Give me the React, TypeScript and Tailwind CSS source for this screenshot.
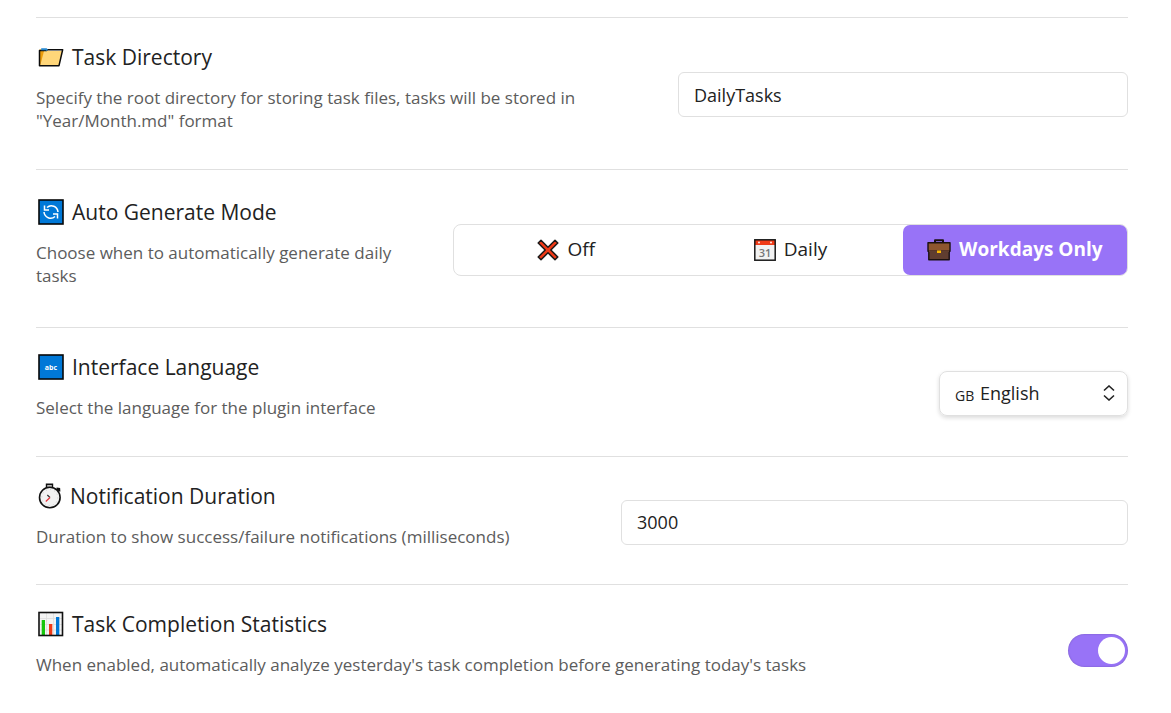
import { useState, type ReactNode } from "react";
import clsx from "clsx";

function FolderIcon() {
    return (
        <svg viewBox="0 0 26 26" className="h-[26px] w-[26px] shrink-0" aria-hidden="true">
            <path d="M1.500 5h6.500l1.500 2H24.500L21 22H1.500z" fill="#ffd679" />
            <path d="M1.500 7h4.500L2.500 20.500l-1 0z" fill="#eb9c0c" />
            <path d="M1.500 21.700V6.500h7l1-.8H24.700L21 21.700z" fill="none" stroke="#0c0c0c" strokeWidth="1.500" strokeLinejoin="round" />
            <path d="M3.200 5.200h5l1 1" fill="none" stroke="#2788d0" strokeWidth="2" />
        </svg>
    );
}

function RefreshIcon() {
    return (
        <svg viewBox="0 0 26 26" className="h-[26px] w-[26px] shrink-0" aria-hidden="true">
            <rect x="1" y="1" width="24" height="24" fill="#0078d7" stroke="#080808" strokeWidth="1.600" />
            <path d="M9 8.500C13 4.800 19.500 7.500 20 13M17 17.500C13 21.200 6.500 18.500 6 13" fill="none" stroke="#fff" strokeWidth="1.500" />
            <path d="M6.500 6.500v4.500h4.500M19.500 19.500v-4.500h-4.500" fill="none" stroke="#fff" strokeWidth="1.500" />
        </svg>
    );
}

function LettersIcon() {
    return (
        <svg viewBox="0 0 26 26" className="h-[26px] w-[26px] shrink-0" aria-hidden="true">
            <rect x="1" y="1" width="24" height="24" fill="#0078d7" stroke="#080808" strokeWidth="1.600" />
            <text x="13" y="15.500" textAnchor="middle" fill="#fff" fontSize="7" fontWeight="700" fontFamily="Open Sans, sans-serif">abc</text>
        </svg>
    );
}

function StopwatchIcon() {
    return (
        <svg viewBox="0 0 24 26" className="h-[26px] w-6 shrink-0" aria-hidden="true">
            <path d="M8.500 1.200h6v4h-6z" fill="#bbb" stroke="#111" strokeWidth="1.400" />
            <path d="M18.500 5.800l2.500 .2 .2 2.500" fill="#777" stroke="#111" strokeWidth="2.400" />
            <circle cx="11.800" cy="14.500" r="10.300" fill="#f2f2f2" stroke="#111" strokeWidth="1.600" />
            <circle cx="11.800" cy="14.500" r="8" fill="none" stroke="#ccc" strokeWidth="1" strokeDasharray="1 3.190" />
            <path d="M9.300 12l2.700 2.500" stroke="#333" strokeWidth="1.200" />
            <path d="M12 14.500l-4.200 4" stroke="#e8323c" strokeWidth="1.200" />
        </svg>
    );
}

function ChartIcon() {
    return (
        <svg viewBox="0 0 26 26" className="h-[26px] w-[26px] shrink-0" aria-hidden="true">
            <rect x="1" y="1.500" width="23.500" height="23" fill="#f4f4f4" />
            <path d="M8.500 2v22M15.500 2v22M2 7.500h22M2 13.500h22M2 19h22" stroke="#ddd" strokeWidth="0.800" />
            <rect x="3.700" y="9" width="3.300" height="15" fill="#16c60c" />
            <rect x="11" y="13" width="3.300" height="11" fill="#f03a17" />
            <rect x="18" y="6" width="3.300" height="18" fill="#0078d7" />
            <rect x="1" y="1.500" width="23.500" height="23" fill="none" stroke="#111" strokeWidth="1.600" />
        </svg>
    );
}

function CrossIcon() {
    return (
        <svg viewBox="0 0 22 22" className="h-[22px] w-[22px] shrink-0" aria-hidden="true">
            <path d="M4 1.200L1.200 4l7 7-7 7L4 20.800l7-7 7 7 2.800-2.800-7-7 7-7L18 1.200l-7 7z" fill="#f03a17" stroke="#1a1a1a" strokeWidth="1.500" strokeLinejoin="round" />
        </svg>
    );
}

function CalendarIcon() {
    return (
        <svg viewBox="0 0 22 22" className="h-[22px] w-[22px] shrink-0" aria-hidden="true">
            <rect x="0.800" y="0.800" width="20.400" height="20.400" fill="#f2f2f2" />
            <rect x="1" y="1" width="20" height="5" fill="#f03a17" />
            <circle cx="5" cy="3.500" r="0.900" fill="#fff" />
            <circle cx="17" cy="3.500" r="0.900" fill="#fff" />
            <text x="11" y="17.500" textAnchor="middle" fill="#777" fontSize="11" fontWeight="600" fontFamily="Open Sans, sans-serif">31</text>
            <rect x="0.800" y="0.800" width="20.400" height="20.400" fill="none" stroke="#1a1a1a" strokeWidth="1.500" />
        </svg>
    );
}

function BriefcaseIcon() {
    return (
        <svg viewBox="0 0 24 22" className="h-[22px] w-6 shrink-0" aria-hidden="true">
            <path d="M8 4V1.300h8V4" fill="none" stroke="#1a1010" strokeWidth="2" strokeLinejoin="round" />
            <path d="M1.800 12h20.400v8.800H1.800z" fill="#603d30" stroke="#1a1010" strokeWidth="1.400" strokeLinejoin="round" />
            <path d="M1 3.800h22v8.400H1z" fill="#8e562e" stroke="#1a1010" strokeWidth="1.400" strokeLinejoin="round" />
            <path d="M2 12.300h20" stroke="#603d30" strokeWidth="1.600" />
            <rect x="10" y="11.500" width="4" height="2.500" fill="#fdb900" />
        </svg>
    );
}

interface SettingRowProps {
    icon: ReactNode;
    title: string;
    description: string;
    htmlFor?: string;
    className?: string;
    children: ReactNode;
}

function SettingRow({ icon, title, description, htmlFor, className, children }: SettingRowProps) {
    return (
        <section className={clsx("flex items-center gap-5 border-t border-[#e0e0e0]", className || "pt-6 pb-[22px]")}>
            <div className="min-w-0 flex-1 pb-[15px]">
                <label htmlFor={htmlFor} className="flex h-[30px] items-center gap-2 pl-[2px] text-[21px] leading-[30px] text-[#222]">
                    {icon}
                    {title}
                </label>
                <p className="mt-[14px] text-[17px] leading-[23px] text-[#5c5c5c]">{description}</p>
            </div>
            {children}
        </section>
    );
}

const modes = [
    { id: "off", label: "Off", icon: <CrossIcon /> },
    { id: "daily", label: "Daily", icon: <CalendarIcon /> },
    { id: "workdays", label: "Workdays Only", icon: <BriefcaseIcon /> },
];

export default function App() {
    const [directory, setDirectory] = useState("DailyTasks");
    const [mode, setMode] = useState("workdays");
    const [duration, setDuration] = useState("3000");
    const [statistics, setStatistics] = useState(true);

    const inputClass = "h-[45px] rounded-md border border-[#e0e0e0] bg-white px-[15px] text-[18px] text-[#222] outline-none focus:border-[#9873f7]";

    return (
        <main className="bg-white pt-[17px] pr-[43px] pl-9 font-['Open_Sans','Noto_Sans',sans-serif]">
            <SettingRow
                icon={<FolderIcon />}
                title="Task Directory"
                description={'Specify the root directory for storing task files, tasks will be stored in "Year/Month.md" format'}
                htmlFor="directory"
            >
                <input id="directory" type="text" value={directory} onChange={(e) => setDirectory(e.target.value)} className={clsx(inputClass, "w-[450px]")} />
            </SettingRow>

            <SettingRow
                icon={<RefreshIcon />}
                title="Auto Generate Mode"
                description="Choose when to automatically generate daily tasks"
                className="pt-[27px] pb-[25px]"
            >
                <div role="group" aria-label="Auto Generate Mode" className="grid h-[52px] w-[675px] grid-cols-3 rounded-lg border border-[#e0e0e0]">
                    {modes.map((m) => (
                        <button
                            key={m.id}
                            type="button"
                            aria-pressed={mode === m.id}
                            onClick={() => setMode(m.id)}
                            className={clsx(
                                "flex items-center justify-center gap-2 rounded-[7px] text-[19px]",
                                mode === m.id ? "bg-[#9873f7] font-bold text-white" : "text-[#222]"
                            )}
                        >
                            {m.icon}
                            {m.label}
                        </button>
                    ))}
                </div>
            </SettingRow>

            <SettingRow
                icon={<LettersIcon />}
                title="Interface Language"
                description="Select the language for the plugin interface"
                htmlFor="language"
            >
                <div className="relative flex h-[45px] w-[189px] items-center rounded-lg border border-[#e0e0e0] shadow-[0_2px_4px_rgba(0,0,0,0.14)]">
                    <span className="pointer-events-none absolute left-[15px] pt-1 text-[14px] text-[#222]">GB</span>
                    <select id="language" defaultValue="en" className="h-full w-full appearance-none rounded-lg bg-transparent pr-9 pl-10 text-[18px] text-[#222] outline-none">
                        <option value="en">English</option>
                    </select>
                    <svg viewBox="0 0 12 16" className="pointer-events-none absolute right-3 h-4 w-3" fill="none" stroke="#222" strokeWidth="1.600" aria-hidden="true">
                        <path d="M1 5.500l5-4.500 5 4.500M1 10.500l5 4.500 5-4.500" />
                    </svg>
                </div>
            </SettingRow>

            <SettingRow
                icon={<StopwatchIcon />}
                title="Notification Duration"
                description="Duration to show success/failure notifications (milliseconds)"
                htmlFor="duration"
                className="pt-6 pb-[21px]"
            >
                <input id="duration" type="text" inputMode="numeric" value={duration} onChange={(e) => setDuration(e.target.value)} className={clsx(inputClass, "w-[507px]")} />
            </SettingRow>

            <SettingRow
                icon={<ChartIcon />}
                title="Task Completion Statistics"
                description="When enabled, automatically analyze yesterday's task completion before generating today's tasks"
                htmlFor="statistics"
            >
                <input
                    id="statistics"
                    type="checkbox"
                    role="switch"
                    checked={statistics}
                    onChange={(e) => setStatistics(e.target.checked)}
                    className="h-[33px] w-[60px] shrink-0 cursor-pointer appearance-none rounded-full bg-gray-300 p-[3px] shadow-[inset_0_0_2px_rgba(0,0,0,0.25)] before:block before:h-[27px] before:w-[27px] before:rounded-full before:bg-white before:transition-transform checked:bg-[#9873f7] checked:before:translate-x-[27px]"
                />
            </SettingRow>
        </main>
    );
}
